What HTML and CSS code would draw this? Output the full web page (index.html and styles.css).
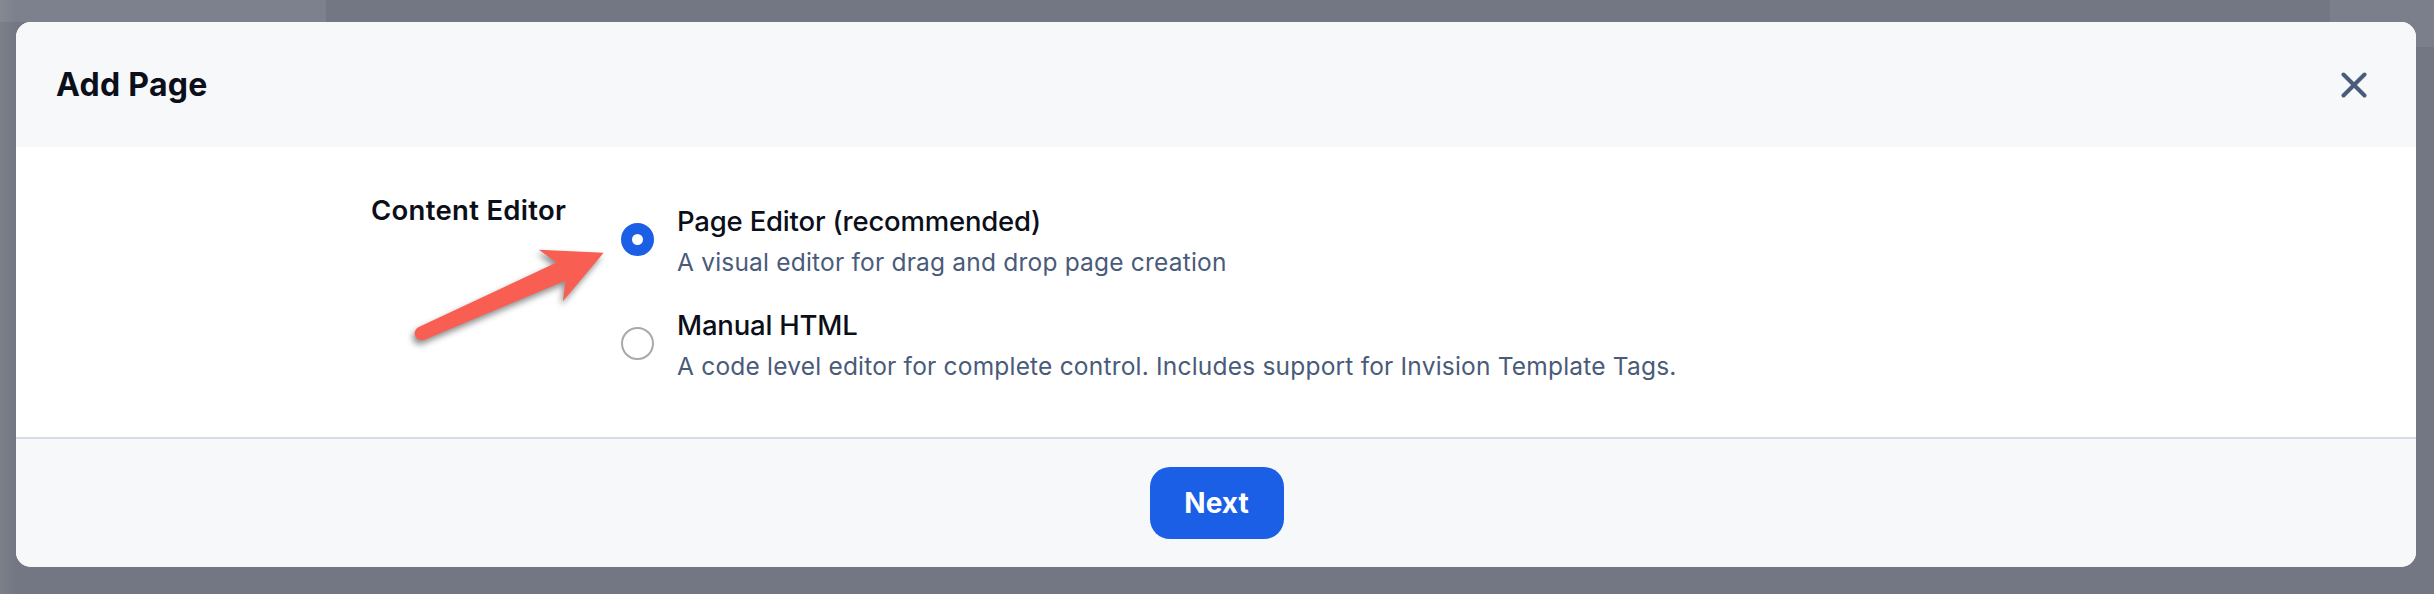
FILE: index.html
```html
<!DOCTYPE html>
<html lang="en">
<head>
<meta charset="utf-8">
<title>Add Page</title>
<link rel="stylesheet" href="styles.css">
</head>
<body>
<div class="modal">
  <header class="modal-header">
    <h1 class="modal-title">Add Page</h1>
    <button class="close" aria-label="Close">
      <svg viewBox="0 0 26 26" width="26" height="26"><path d="M2.5 2.5 L23.5 23.5 M23.5 2.5 L2.5 23.5" stroke="#4a5b7b" stroke-width="4" stroke-linecap="round" fill="none"/></svg>
    </button>
  </header>
  <section class="modal-body">
    <div class="field-label">Content Editor</div>
    <div class="options">
      <label class="option">
        <span class="radio radio-checked"></span>
        <span class="option-text">
          <span class="option-title">Page Editor (recommended)</span>
          <span class="option-desc">A visual editor for drag and drop page creation</span>
        </span>
      </label>
      <label class="option">
        <span class="radio"></span>
        <span class="option-text">
          <span class="option-title">Manual HTML</span>
          <span class="option-desc">A code level editor for complete control. Includes support for Invision Template Tags.</span>
        </span>
      </label>
    </div>
    <svg class="annotation" viewBox="0 0 250 130" width="250" height="130">
      <g transform="translate(21.7 103.3) rotate(-23.9)">
        <path d="M0,-7 L152,-10 L141,-29 L199,0 L142,28 L153,10 L0,7 A7,7 0 0 1 0,-7 Z" fill="#f85e52"/>
      </g>
    </svg>
  </section>
  <footer class="modal-footer">
    <button class="btn-next">Next</button>
  </footer>
</div>
</body>
</html>
```

FILE: styles.css
```css
* { box-sizing: border-box; }

html, body {
  margin: 0;
  height: 100%;
}

body {
  width: 2434px;
  height: 594px;
  overflow: hidden;
  font-family: Inter, "Noto Sans", sans-serif;
  background:
    linear-gradient(180deg, rgba(255,255,255,0.07) 0, rgba(255,255,255,0.07) 22px, transparent 22px) 0 0 / 326px 100% no-repeat,
    linear-gradient(180deg, rgba(255,255,255,0.06) 0, rgba(255,255,255,0.06) 47px, transparent 47px) 2330px 0 / 104px 100% no-repeat,
    linear-gradient(90deg, #7c8088 0, #737784 16px),
    #717682;
  padding: 22px 18px 0 16px;
}

.modal {
  width: 2400px;
  height: 545px;
  background: #ffffff;
  border-radius: 15px;
  overflow: hidden;
  display: flex;
  flex-direction: column;
}

.modal-header {
  height: 125px;
  background: #f7f8fa;
  display: flex;
  align-items: center;
  justify-content: space-between;
  padding: 0 49px 0 40px;
}

.modal-title {
  margin: 0;
  font-size: 32px;
  font-weight: 700;
  color: #0b0f19;
  letter-spacing: 0.3px;
}

.close {
  border: 0;
  background: none;
  padding: 0;
  width: 26px;
  height: 26px;
  display: flex;
}

.modal-body {
  position: relative;
  flex: 1;
  display: flex;
  padding: 43px 0 0 355px;
}

.field-label {
  width: 250px;
  font-size: 27.5px;
  line-height: 40px;
  font-weight: 600;
  color: #0b0f19;
  letter-spacing: 0.3px;
}

.options {
  display: flex;
  flex-direction: column;
  gap: 22px;
  padding-top: 10.7px;
}

.option {
  display: flex;
  align-items: center;
  gap: 23px;
}

.radio {
  width: 33px;
  height: 33px;
  border-radius: 50%;
  border: 2px solid #a9a9a9;
  background: #fff;
  flex: none;
  margin-bottom: 4px;
}

.radio-checked {
  border: 11px solid #1a5fe6;
  background: #fff;
}

.option-text {
  display: flex;
  flex-direction: column;
}

.option-title {
  font-size: 27.5px;
  line-height: 40px;
  font-weight: 500;
  color: #0b0f19;
  letter-spacing: -0.2px;
}

.option-desc {
  font-size: 24.5px;
  line-height: 42px;
  color: #4a5b7a;
  letter-spacing: 0.2px;
}

.annotation {
  position: absolute;
  left: 384px;
  top: 83px;
  filter: drop-shadow(-2px 4px 3px rgba(0,0,0,0.45));
}

.modal-footer {
  height: 130px;
  background: #f7f8fa;
  border-top: 2px solid #d6dbe7;
  display: flex;
  align-items: center;
  justify-content: center;
}

.btn-next {
  width: 134px;
  height: 72px;
  border: 0;
  border-radius: 20px;
  background: #1a5fe6;
  color: #fff;
  font-family: Inter, "Noto Sans", sans-serif;
  font-size: 28px;
  font-weight: 700;
  margin-left: 1px;
}
```
